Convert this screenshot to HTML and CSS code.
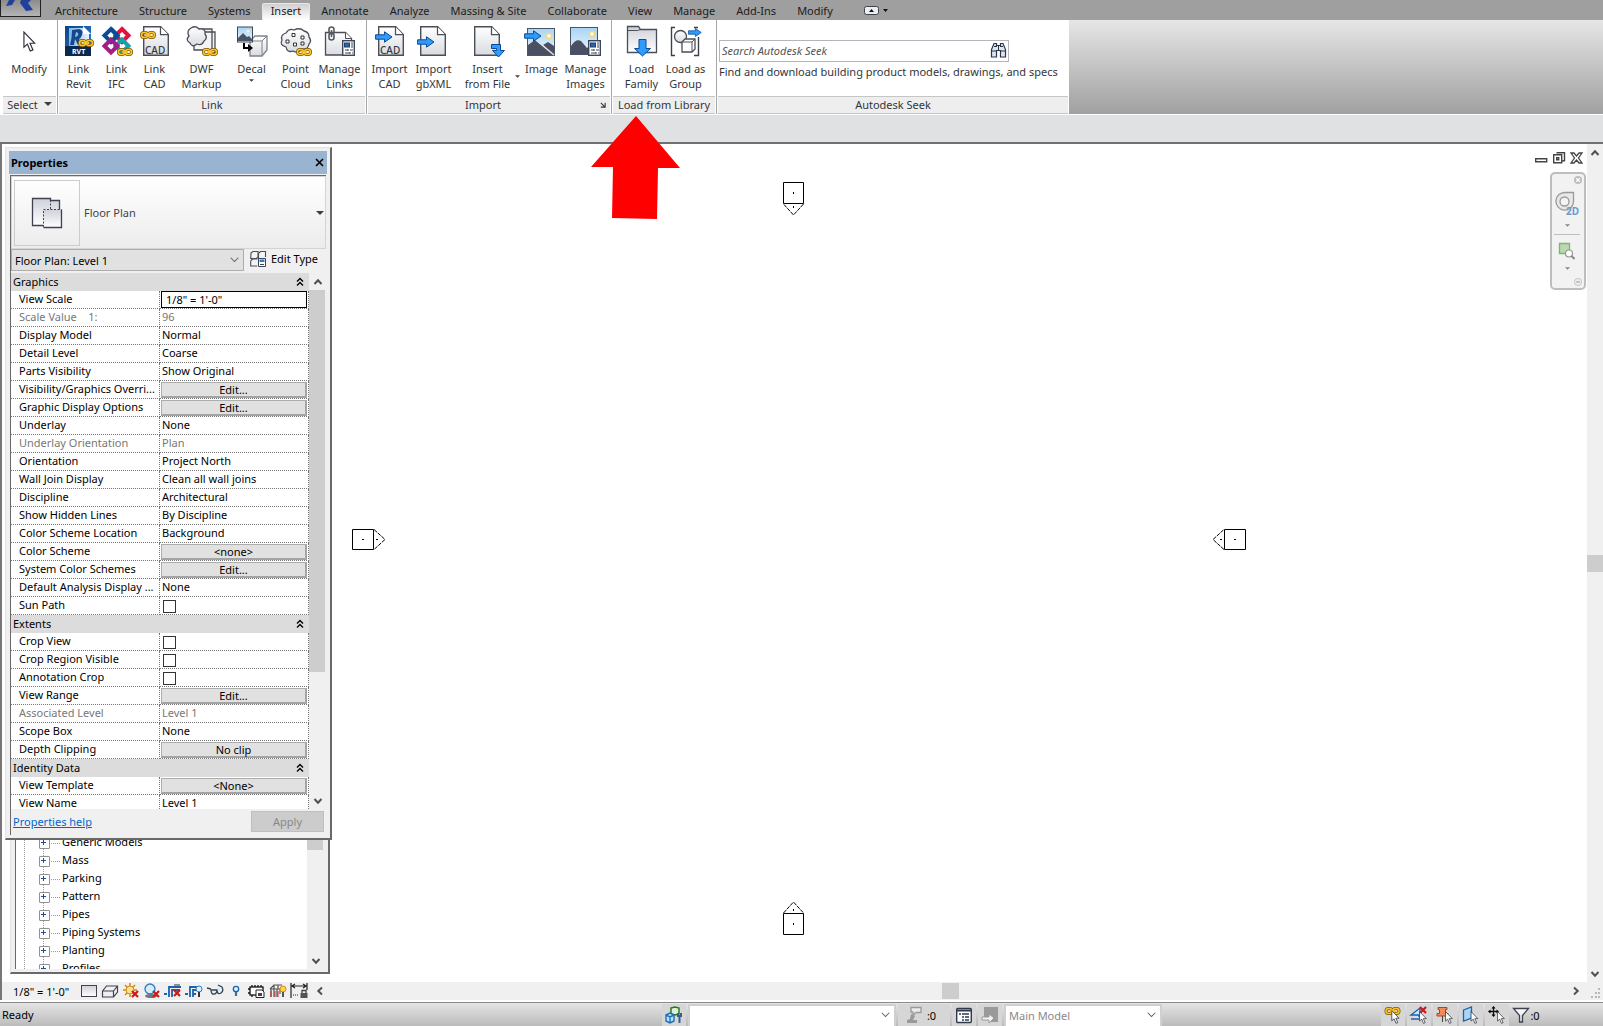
FILE: index.html
```html
<!DOCTYPE html>
<html lang="en">
<head>
    <meta charset="UTF-8">
    <meta name="viewport" content="width=device-width, initial-scale=1.0">
    <title>Floor Plan: Level 1</title>
    <link rel="stylesheet" href="styles.css">
</head>
<body>
    <!-- shared icon parts -->
    <svg class="defs" aria-hidden="true">
        <defs>
            <linearGradient id="paper" x1="0" y1="0" x2="0" y2="1">
                <stop offset="0" stop-color="#ffffff"/>
                <stop offset="1" stop-color="#d9dbe0"/>
            </linearGradient>
            <linearGradient id="sky" x1="0" y1="0" x2="0" y2="1">
                <stop offset="0" stop-color="#a8d4f5"/>
                <stop offset="1" stop-color="#eef7fd"/>
            </linearGradient>
            <linearGradient id="revit" x1="0" y1="0" x2="1" y2="1">
                <stop offset="0" stop-color="#0a4288"/>
                <stop offset="1" stop-color="#2f8ad4"/>
            </linearGradient>
            <linearGradient id="ice" x1="0" y1="0" x2="1" y2="0">
                <stop offset="0" stop-color="#7db9e8"/>
                <stop offset="1" stop-color="#eaf5fd"/>
            </linearGradient>
            <linearGradient id="steel" x1="0" y1="0" x2="0" y2="1">
                <stop offset="0" stop-color="#cfd1da"/>
                <stop offset="1" stop-color="#ffffff"/>
            </linearGradient>
        </defs>
        <symbol id="chain" viewBox="0 0 16 8">
            <g fill="none" stroke="#7d5500" stroke-width="3">
                <rect x="1.500" y="1.500" width="6" height="5" rx="2.500"/>
                <rect x="8.500" y="1.500" width="6" height="5" rx="2.500"/>
            </g>
            <g fill="none" stroke="#fcc62c" stroke-width="1.500">
                <rect x="1.500" y="1.500" width="6" height="5" rx="2.500"/>
                <rect x="8.500" y="1.500" width="6" height="5" rx="2.500"/>
                <path d="M5 4h6"/>
            </g>
        </symbol>
        <symbol id="page" viewBox="0 0 26 30">
            <path d="M.7.700h17L25.300 8.500v20.800H.7z" fill="url(#paper)" stroke="#4a4e57" stroke-width="1.400"/>
            <path d="M17.500.700v8h7.800" fill="#fff" stroke="#4a4e57" stroke-width="1.200"/>
        </symbol>
        <symbol id="arrow" viewBox="0 0 18 12">
            <path d="M.6 3.800h8.900V.8l7.500 5.200-7.500 5.200v-3H.6z" fill="#2f9bff" stroke="#0b4a94"/>
        </symbol>
        <symbol id="form" viewBox="0 0 13 16">
            <rect x=".7" y=".7" width="11.600" height="14.600" fill="#fff" stroke="#3c4658" stroke-width="1.400"/>
            <rect x="2.500" y="3" width="5" height="4" fill="#2f66a8" stroke="#1c3d6e"/>
            <path d="M9 3h2M9 5h2M9 7h2M3 10h3M8 10h3M3 13h5M10 13h1M6 9v2M8 12v2" stroke="#3c4658"/>
        </symbol>
        <symbol id="pointer" viewBox="0 0 12 20">
            <path d="M.7 1v14.500l3.300-3 2.700 6.500 2.600-1-2.800-6.300h4.600z" fill="#fff" stroke="#2c3038" stroke-width="1.100"/>
        </symbol>
        <symbol id="redx" viewBox="0 0 8 8">
            <path d="M1 1l6 6M7 1L1 7" stroke="#d01818" stroke-width="2.200"/>
        </symbol>
        <symbol id="up" viewBox="0 0 10 10"><path d="M1.500 7L5 3.300 8.500 7" fill="none" stroke="#505050" stroke-width="2"/></symbol>
        <symbol id="down" viewBox="0 0 10 10"><path d="M1.500 3L5 6.700 8.500 3" fill="none" stroke="#505050" stroke-width="2"/></symbol>
        <symbol id="left" viewBox="0 0 10 10"><path d="M7 1.500L3.300 5 7 8.500" fill="none" stroke="#505050" stroke-width="2"/></symbol>
        <symbol id="right" viewBox="0 0 10 10"><path d="M3 1.500L6.700 5 3 8.500" fill="none" stroke="#505050" stroke-width="2"/></symbol>
        <symbol id="drop" viewBox="0 0 12 8"><path d="M1 1l5 5 5-5" fill="none" stroke="#606060" stroke-width="1.400"/></symbol>
        <symbol id="triangle" viewBox="0 0 8 4"><path d="M0 0h8L4 4z" fill="#3f3f3f"/></symbol>
        <symbol id="collapse" viewBox="0 0 8 10"><path d="M1 4.500L4 1.500l3 3M1 8.500l3-3 3 3" fill="none" stroke="#000" stroke-width="1.400"/></symbol>
        <symbol id="marker" viewBox="0 0 34 22">
            <path d="M.5.500h21v20H.5z" fill="#fff" stroke="#000"/>
            <path d="M22 .5l11 10-11 10" fill="none" stroke="#000" stroke-dasharray="4 1"/>
            <path d="M10 10.500h2M24 10.500h2" stroke="#000"/>
        </symbol>
    </svg>

    <header>
        <nav class="tabs">
            <button class="app-button" aria-label="Application menu">
                <svg width="40" height="16" viewBox="0 0 40 16"><path d="M8 0L5 6l6-1 3-5zM20 0h10L27 3l5 7-7 1-6-8z" fill="#21409a"/></svg>
            </button>
            <a href="#">Architecture</a>
            <a href="#">Structure</a>
            <a href="#">Systems</a>
            <a href="#" class="active">Insert</a>
            <a href="#">Annotate</a>
            <a href="#">Analyze</a>
            <a href="#">Massing &amp; Site</a>
            <a href="#">Collaborate</a>
            <a href="#">View</a>
            <a href="#">Manage</a>
            <a href="#">Add-Ins</a>
            <a href="#">Modify</a>
            <button class="ribbon-toggle" aria-label="Minimize ribbon">
                <svg width="24" height="9" viewBox="0 0 24 9"><rect x=".5" y=".5" width="14" height="8" rx="2" fill="#eee" stroke="#3c4450"/><path d="M5 6l2.500-3L10 6zM19 3h5l-2.500 3z" fill="#111"/></svg>
            </button>
        </nav>

        <div class="ribbon">
            <section class="panel panel-select">
                <div class="tools">
                    <button class="tool">
                        <svg viewBox="0 0 32 32"><use href="#pointer" x="10" y="6" width="13" height="21"/></svg>
                        <span>Modify</span>
                    </button>
                </div>
                <h2>Select <svg class="tri"><use href="#triangle"/></svg></h2>
            </section>

            <section class="panel panel-link">
                <div class="tools">
                    <button class="tool narrow">
                        <svg viewBox="0 0 32 32">
                            <rect x="2" y="1" width="26" height="30" fill="url(#revit)"/>
                            <path d="M6 3h14l6 6v12H6z" fill="url(#ice)"/>
                            <path d="M20 1v8h8z" fill="#fff"/>
                            <path d="M9 5l7-1q5 1 3 6-1 3-3 4l3 5-4 1-3-6-1 6H7q2-7 2-15z" fill="#15498c"/>
                            <path d="M13 7l-1 5q4-1 3-4z" fill="#8cc0ea"/>
                            <rect x="2" y="21" width="26" height="10" fill="#0b2850"/>
                            <text x="9" y="29" class="rvt">RVT</text>
                            <use href="#chain" x="15" y="14" width="16" height="8"/>
                        </svg>
                        <span>Link<br>Revit</span>
                    </button>
                    <button class="tool narrow">
                        <svg viewBox="0 0 32 32">
                            <g fill="none" stroke-width="4">
                                <path d="M10 4l6.500 6.500L10 17l-6.500-6.500z" stroke="#0c4a94"/>
                                <path d="M21 4l6.500 6.500L21 17l-6.500-6.500z" stroke="#e2133f"/>
                                <path d="M21 14.500l6.500 6.500-6.500 6.500-6.500-6.500z" stroke="#12a5ac"/>
                                <path d="M10 14.500l6.500 6.500-6.500 6.500L3.500 21z" stroke="#a51c88"/>
                                <path d="M10 4l6.500 6.500-4 4" stroke="#0c4a94"/>
                            </g>
                            <use href="#chain" x="16" y="23" width="16" height="8"/>
                        </svg>
                        <span>Link<br>IFC</span>
                    </button>
                    <button class="tool narrow">
                        <svg viewBox="0 0 32 32">
                            <use href="#page" x="4" y="1" width="26" height="30"/>
                            <use href="#chain" x="1" y="6" width="16" height="8"/>
                            <text x="6" y="29" class="cad">CAD</text>
                        </svg>
                        <span>Link<br>CAD</span>
                    </button>
                    <button class="tool wide">
                        <svg viewBox="0 0 32 32">
                            <path d="M14 7h15v21h-4M12 4h14v21H8v-5" fill="#f4f4f6" stroke="#4a4e57" stroke-width="1.300"/>
                            <path d="M5 3q5-3 8 1 7-1 6 5 3 4-1 7-2 5-7 3-5 4-7-1-5-3-1-7-3-5 2-8z" fill="url(#paper)" stroke="#4a4e57" stroke-width="1.300"/>
                            <use href="#chain" x="16" y="23" width="16" height="8"/>
                        </svg>
                        <span>DWF<br>Markup</span>
                    </button>
                    <button class="tool">
                        <svg viewBox="0 0 32 32">
                            <path d="M14 16l5-5h12v14l-5 6H14z" fill="url(#paper)" stroke="#7d828c" stroke-width="1.300"/>
                            <path d="M14 16h12v15M26 16l5-5" fill="none" stroke="#7d828c"/>
                            <rect x="1.500" y="2" width="15" height="15" fill="url(#sky)" stroke="#3c4658"/>
                            <path d="M2 16v-3l5-5 4 4 2-1 3 3v2z" fill="#4a5568"/>
                            <circle cx="12" cy="6" r="1.500" fill="#fff3c0"/>
                            <path d="M8 18v5h6" fill="none" stroke="#000" stroke-width="2"/>
                            <path d="M12 19l5 4-5 4z"/>
                        </svg>
                        <span>Decal<br><svg class="tri-small"><use href="#triangle"/></svg></span>
                    </button>
                    <button class="tool">
                        <svg viewBox="0 0 32 32">
                            <path d="M6 8q3-5 8-3 6-3 10 1 5 1 5 6 3 4 0 7-1 6-7 5-4 5-9 2-6 2-7-4-7-2-4-7-2-5 4-7z" fill="url(#paper)" stroke="#4a4e57" stroke-width="1.300"/>
                            <path d="M12 8.500h3v3h-3zM21 11h3v3h-3zM6 15h3v3H6zM13.500 18h3v3h-3zM21 17h3v3h-3z" fill="#fff" stroke="#333"/>
                            <use href="#chain" x="16" y="23" width="16" height="8"/>
                        </svg>
                        <span>Point<br>Cloud</span>
                    </button>
                    <button class="tool">
                        <svg viewBox="0 0 32 32">
                            <path d="M1.500 7.500h20l6 6V30h-26z" fill="url(#paper)" stroke="#4a4e57" stroke-width="1.300"/>
                            <path d="M21.500 7.500v6h6" fill="#fff" stroke="#4a4e57"/>
                            <use href="#form" x="18" y="15" width="13" height="16"/>
                            <g fill="none" stroke="#555a63" stroke-width="1.600">
                                <rect x="5" y="2" width="5" height="7" rx="2.500"/>
                                <rect x="5" y="8" width="5" height="7" rx="2.500"/>
                                <path d="M7.500 5v7"/>
                            </g>
                        </svg>
                        <span>Manage<br>Links</span>
                    </button>
                </div>
                <h2>Link</h2>
            </section>

            <section class="panel panel-import">
                <div class="tools">
                    <button class="tool">
                        <svg viewBox="0 0 32 32">
                            <use href="#page" x="4" y="1" width="26" height="30"/>
                            <use href="#arrow" x="1" y="6" width="18" height="12"/>
                            <text x="6" y="29" class="cad">CAD</text>
                        </svg>
                        <span>Import<br>CAD</span>
                    </button>
                    <button class="tool">
                        <svg viewBox="0 0 32 32">
                            <use href="#page" x="2" y="1" width="26" height="30"/>
                            <use href="#arrow" x="-1" y="11" width="18" height="12"/>
                        </svg>
                        <span>Import<br>gbXML</span>
                    </button>
                    <button class="tool xwide">
                        <svg viewBox="0 0 32 32">
                            <use href="#page" x="2" y="1" width="26" height="30"/>
                            <path d="M19.500 19.500h9v6h4L26.500 32l-6-6.500h4v-2h-5z" fill="#2f9bff" stroke="#0b4a94"/>
                        </svg>
                        <span>Insert<br>from File</span>
                        <svg class="tri-small side"><use href="#triangle"/></svg>
                    </button>
                    <button class="tool">
                        <svg viewBox="0 0 32 32">
                            <rect x="1.500" y="3.500" width="27" height="27" fill="url(#sky)" stroke="#4a5568"/>
                            <path d="M2 30V20l7-5 19 15zM17 20l5-3 6 4v9z" fill="#4a5062"/>
                            <path d="M10 15l18 15" stroke="#dfe3e8" stroke-width="1.500"/>
                            <circle cx="23" cy="11" r="2.500" fill="#fff" stroke="#f5d878" stroke-width="1.500"/>
                            <use href="#arrow" x="-2" y="5" width="18" height="12"/>
                        </svg>
                        <span>Image</span>
                    </button>
                    <button class="tool">
                        <svg viewBox="0 0 32 32">
                            <rect x=".5" y="2.500" width="27" height="27" fill="url(#sky)" stroke="#4a5568"/>
                            <path d="M1 29V21q5-8 10-5l6 7 4-3 6 2v7z" fill="#4a5062"/>
                            <circle cx="22" cy="9" r="2.500" fill="#fff" stroke="#f5d878" stroke-width="1.500"/>
                            <use href="#form" x="18" y="15" width="13" height="16"/>
                        </svg>
                        <span>Manage<br>Images</span>
                    </button>
                </div>
                <h2>Import <svg class="launcher" viewBox="0 0 7 7"><path d="M1 1l4 4M6 1v5H1" fill="none" stroke="#333" stroke-width="1.300"/></svg></h2>
            </section>

            <section class="panel panel-load">
                <div class="tools">
                    <button class="tool">
                        <svg viewBox="0 0 32 32">
                            <path d="M1.500 1.500h11l2 3h16v23h-29z" fill="url(#steel)" stroke="#4a4e57" stroke-width="1.300"/>
                            <path d="M1.500 5.500h10l3-1" fill="none" stroke="#4a4e57"/>
                            <path d="M13 14.500h7v9h4.500l-8 7.500-8-7.500H13z" fill="#2f9bff" stroke="#0b4a94"/>
                        </svg>
                        <span>Load<br>Family</span>
                    </button>
                    <button class="tool">
                        <svg viewBox="0 0 32 32">
                            <path d="M5 2.500H1.500v28H5M24 2.500h4M24 30.500h4.500V12" fill="none" stroke="#3c4048" stroke-width="1.400"/>
                            <circle cx="10.500" cy="11.500" r="6" fill="url(#paper)" stroke="#4a4e57" stroke-width="1.300"/>
                            <path d="M12 17l3-3h10v10l-3 3H12z" fill="#fff" stroke="#4a4e57" stroke-width="1.300"/>
                            <path d="M12 17h10v10M22 17l3-3" fill="none" stroke="#4a4e57"/>
                            <use href="#arrow" x="18" y="2" width="14" height="11"/>
                        </svg>
                        <span>Load as<br>Group</span>
                    </button>
                </div>
                <h2>Load from Library</h2>
            </section>

            <section class="panel panel-seek">
                <div class="seek">
                    <div class="search">
                        <input type="text" placeholder="Search Autodesk Seek" aria-label="Search Autodesk Seek">
                        <button aria-label="Search">
                            <svg width="17" height="16" viewBox="0 0 17 16"><path d="M4 1.500h2.500v2h4v-2H13l2.500 6V15H10.500V8.500h-4V15H1.500V7.500z" fill="#dfe7f2" stroke="#2b3648" stroke-width="1.200"/><path d="M1.500 9h5M10.500 9h5M4 4.500h3M10 4.500h3M8.500 4v4" stroke="#2b3648"/></svg>
                        </button>
                    </div>
                    <p>Find and download building product models, drawings, and specs</p>
                </div>
                <h2>Autodesk Seek</h2>
            </section>
        </div>
        <div class="options-bar"></div>
    </header>

    <main>
        <div class="canvas">
            <svg class="marker north"><use href="#marker" transform="rotate(90 11 11)" width="34" height="22"/></svg>
            <svg class="marker west"><use href="#marker" width="34" height="22"/></svg>
            <svg class="marker east"><use href="#marker" transform="rotate(180 11 11)" width="34" height="22"/></svg>
            <svg class="marker south"><use href="#marker" transform="rotate(-90 11 11)" width="34" height="22"/></svg>

            <svg class="window-buttons" width="48" height="14" viewBox="0 0 48 14">
                <path d="M.7 7.700h11v3H.7z" fill="#fff" stroke="#444" stroke-width="1.400"/>
                <path d="M21.500 1.700h8v8h-2M18.700 3.700h8v8h-8zM21.700 6.700h2v2h-2z" fill="none" stroke="#444" stroke-width="1.400"/>
                <path d="M36 2h3l2.500 3L44 2h3l-3.500 5L47 12h-3l-2.500-3L39 12h-3l3.500-5z" fill="#fff" stroke="#444" stroke-width="1.300"/>
            </svg>

            <div class="nav-bar">
                <svg class="nav-dot" viewBox="0 0 9 9"><circle cx="4.500" cy="4.500" r="4.500" fill="#bdbdbd"/><path d="M2.500 2.500l4 4M6.500 2.500l-4 4" stroke="#fff" stroke-width="1.300"/></svg>
                <button aria-label="2D steering wheel">
                    <svg width="26" height="26" viewBox="0 0 26 26"><path d="M11 1.500h8.500V11a8.800 8.800 0 1 1-8.500-9.500z" fill="#e8e8e8" stroke="#999" stroke-width="1.300"/><circle cx="10.500" cy="10.500" r="4.500" fill="#f4f4f4" stroke="#999" stroke-width="1.300"/><text x="12" y="24" class="two-d">2D</text></svg>
                </button>
                <svg class="tri-nav"><use href="#triangle"/></svg>
                <hr>
                <button aria-label="Zoom in region">
                    <svg width="18" height="18" viewBox="0 0 18 18"><path d="M1.500 1.500h10v10h-10z" fill="#bcd8b2" stroke="#7eb56e" stroke-width="1.300"/><circle cx="11" cy="11.500" r="3.500" fill="#fff" stroke="#999" stroke-width="1.200"/><path d="M13.500 14l3 3" stroke="#888" stroke-width="2"/></svg>
                </button>
                <svg class="tri-nav"><use href="#triangle"/></svg>
                <svg class="nav-dot last" viewBox="0 0 9 9"><circle cx="4.500" cy="4.500" r="4" fill="#eee" stroke="#bdbdbd"/><path d="M2.500 4.500h4" stroke="#aaa" stroke-width="1.500"/></svg>
            </div>

            <aside class="palette browser">
                <div class="browser-body">
                    <ul>
                        <li>Generic Models</li>
                        <li>Mass</li>
                        <li>Parking</li>
                        <li>Pattern</li>
                        <li>Pipes</li>
                        <li>Piping Systems</li>
                        <li>Planting</li>
                        <li>Profiles</li>
                    </ul>
                    <div class="scroll-y">
                        <span class="thumb"></span>
                        <button aria-label="Scroll down"><svg><use href="#down"/></svg></button>
                    </div>
                </div>
            </aside>

            <aside class="palette properties">
                <div class="title-bar">
                    <h1>Properties</h1>
                    <button aria-label="Close"><svg width="9" height="9" viewBox="0 0 9 9"><path d="M1 1l7 7M8 1L1 8" stroke="#000" stroke-width="1.600"/></svg></button>
                </div>
                <div class="palette-body">
                    <button class="type-selector">
                        <span class="type-thumb">
                            <svg width="32" height="32" viewBox="0 0 32 32">
                                <path d="M1.500 1.500h18v2h9v24h-9v1h-18z" fill="url(#steel)" stroke="#3f4250" stroke-width="1.300"/>
                                <path d="M12.500 12.500h18v18h-18z" fill="url(#steel)"/>
                                <path d="M12.500 30.500h18v-18" fill="none" stroke="#3f4250" stroke-width="1.300"/>
                                <path d="M19.500 3v9.500M12.500 30V12.500h18" fill="none" stroke="#3f4250" stroke-dasharray="2 1.500"/>
                            </svg>
                        </span>
                        <span class="type-name">Floor Plan</span>
                        <svg class="tri"><use href="#triangle"/></svg>
                    </button>
                    <div class="instance-row">
                        <div class="combo">
                            <select aria-label="Instance"><option>Floor Plan: Level 1</option></select>
                            <svg><use href="#drop"/></svg>
                        </div>
                        <button class="edit-type">
                            <svg width="16" height="16" viewBox="0 0 16 16"><path d="M1 2l2-1.500h5V6l-1.500 1.500H.7zM9 2l1.500-1.500h5V6M1 9.500l1.500-1.500h5M.7 9.500V15h6.500M8.500 2v5.500h6" fill="#f5f5f7" stroke="#4a4e57" stroke-width="1.100"/><path d="M8.500 7.500h7v8h-7z" fill="#fff" stroke="#3c4658"/><path d="M9.500 8.500h5v2.500h-5z" fill="#2878d0"/><path d="M10 13.500h4" stroke="#3c4658"/></svg>
                            Edit Type
                        </button>
                    </div>
                    <div class="grid-area">
                        <table>
                            <tr class="group"><th colspan="2">Graphics<svg><use href="#collapse"/></svg></th></tr>
                            <tr><td><label for="scale">View Scale</label></td><td class="field"><input type="text" id="scale" value="1/8&quot; = 1'-0&quot;"></td></tr>
                            <tr class="off"><td>Scale Value &nbsp;&nbsp; 1:</td><td>96</td></tr>
                            <tr><td>Display Model</td><td>Normal</td></tr>
                            <tr><td>Detail Level</td><td>Coarse</td></tr>
                            <tr><td>Parts Visibility</td><td>Show Original</td></tr>
                            <tr><td>Visibility/Graphics Overri...</td><td class="field"><button>Edit...</button></td></tr>
                            <tr><td>Graphic Display Options</td><td class="field"><button>Edit...</button></td></tr>
                            <tr><td>Underlay</td><td>None</td></tr>
                            <tr class="off"><td>Underlay Orientation</td><td>Plan</td></tr>
                            <tr><td>Orientation</td><td>Project North</td></tr>
                            <tr><td>Wall Join Display</td><td>Clean all wall joins</td></tr>
                            <tr><td>Discipline</td><td>Architectural</td></tr>
                            <tr><td>Show Hidden Lines</td><td>By Discipline</td></tr>
                            <tr><td>Color Scheme Location</td><td>Background</td></tr>
                            <tr><td>Color Scheme</td><td class="field"><button>&lt;none&gt;</button></td></tr>
                            <tr><td>System Color Schemes</td><td class="field"><button>Edit...</button></td></tr>
                            <tr><td>Default Analysis Display ...</td><td>None</td></tr>
                            <tr><td><label for="sun">Sun Path</label></td><td><input type="checkbox" id="sun"></td></tr>
                            <tr class="group"><th colspan="2">Extents<svg><use href="#collapse"/></svg></th></tr>
                            <tr><td><label for="crop">Crop View</label></td><td><input type="checkbox" id="crop"></td></tr>
                            <tr><td><label for="region">Crop Region Visible</label></td><td><input type="checkbox" id="region"></td></tr>
                            <tr><td><label for="annotation">Annotation Crop</label></td><td><input type="checkbox" id="annotation"></td></tr>
                            <tr><td>View Range</td><td class="field"><button>Edit...</button></td></tr>
                            <tr class="off"><td>Associated Level</td><td>Level 1</td></tr>
                            <tr><td>Scope Box</td><td>None</td></tr>
                            <tr><td>Depth Clipping</td><td class="field"><button>No clip</button></td></tr>
                            <tr class="group"><th colspan="2">Identity Data<svg><use href="#collapse"/></svg></th></tr>
                            <tr><td>View Template</td><td class="field"><button>&lt;None&gt;</button></td></tr>
                            <tr><td>View Name</td><td>Level 1</td></tr>
                        </table>
                        <div class="scroll-y">
                            <button aria-label="Scroll up"><svg><use href="#up"/></svg></button>
                            <span class="thumb"></span>
                            <button aria-label="Scroll down"><svg><use href="#down"/></svg></button>
                        </div>
                    </div>
                    <div class="palette-footer">
                        <a href="#">Properties help</a>
                        <button disabled>Apply</button>
                    </div>
                </div>
            </aside>
        </div>
        <div class="canvas-scroll">
            <button aria-label="Scroll up"><svg><use href="#up"/></svg></button>
            <span class="thumb"></span>
            <button aria-label="Scroll down"><svg><use href="#down"/></svg></button>
        </div>
    </main>

    <div class="view-bar">
        <span class="scale">1/8" = 1'-0"</span>
        <div class="view-tools">
            <button aria-label="Detail level"><svg viewBox="0 0 18 16"><rect x="1.500" y="2.500" width="15" height="11" fill="url(#steel)" stroke="#3f4250"/></svg></button>
            <button aria-label="Visual style"><svg viewBox="0 0 18 16"><path d="M1.500 8l4-5h11v6l-4 5h-11zM1.500 8h11v6M12.500 8l4-5" fill="#f0f0f2" stroke="#3f4250" stroke-width="1.200"/></svg></button>
            <button aria-label="Sun path"><svg viewBox="0 0 18 16"><path d="M8 0v14M1 7h14M3 2l10 10M13 2L3 12" stroke="#d08a10" stroke-width="1.500"/><circle cx="8" cy="7" r="4" fill="#ffe08a" stroke="#d08a10"/><use href="#redx" x="9" y="7" width="8" height="8"/></svg></button>
            <button aria-label="Shadows"><svg viewBox="0 0 18 16"><ellipse cx="8" cy="13" rx="6" ry="2" fill="#777"/><circle cx="7" cy="6" r="5" fill="#d5ecfb" stroke="#2b7cc0" stroke-width="1.300"/><use href="#redx" x="9" y="7" width="8" height="8"/></svg></button>
            <button aria-label="Crop view"><svg viewBox="0 0 18 16"><path d="M0 11h3M5 14V4h12M8 14V7h8" fill="none" stroke="#1c62ac" stroke-width="1.800"/><path d="M10 2h6" stroke="#333"/><use href="#redx" x="9" y="6" width="8" height="8"/></svg></button>
            <button aria-label="Show crop region"><svg viewBox="0 0 18 16"><path d="M0 11h3M5 14V4h7M8 14V7h4M8 11h3" fill="none" stroke="#1c62ac" stroke-width="1.800"/><circle cx="14" cy="6" r="3" fill="#d9f0ff" stroke="#2b7cc0"/><path d="M14 9v5" stroke="#333" stroke-width="2"/></svg></button>
            <button aria-label="Temporary hide"><svg viewBox="0 0 18 16"><path d="M1 5l4 1M5 7q0 5 4 4 2-1 2-4zM11 8q1 4 4 2 3-2 1-6l-4-2" fill="#d9eef8" stroke="#39424f" stroke-width="1.300"/></svg></button>
            <button aria-label="Reveal hidden elements"><svg viewBox="0 0 18 16"><circle cx="9" cy="6" r="2.700" fill="#d9f0ff" stroke="#1c62ac" stroke-width="1.300"/><path d="M9 9v4" stroke="#4a6a90" stroke-width="2.200"/></svg></button>
            <button aria-label="Temporary view properties"><svg viewBox="0 0 18 16"><rect x="2" y="4" width="13" height="8" fill="#fff" stroke="#111" stroke-width="1.300"/><path d="M4 2v2M7 2v2M10 2v2M13 2v2M4 12v2M0 6h2M0 10h2" stroke="#111" stroke-width="1.300"/><path d="M8 7h6l2 2v5.500H8z" fill="#fff" stroke="#222"/><path d="M10 10h4v3h-4z" fill="#444"/></svg></button>
            <button aria-label="Analytical model"><svg viewBox="0 0 18 16"><path d="M1 6l4-4h8M1 6h11M2 6v8M5 6v8M8 6v8M11 6v5M5 2v4M9 2v4" fill="none" stroke="#555" stroke-width="1.200"/><path d="M2 8v6M6 8v6M9 8v6" stroke="#c03028"/><circle cx="14" cy="6" r="3" fill="#ffd24a" stroke="#e08a10"/><path d="M14 9v5" stroke="#555" stroke-width="2"/></svg></button>
            <button aria-label="Reveal constraints"><svg viewBox="0 0 18 16"><path d="M1 0v15M17 0v7M2 3h14M5 1L2 3l3 2M13 1l3 2-3 2" fill="none" stroke="#222" stroke-width="1.200"/><path d="M3 12h6" stroke="#222" stroke-dasharray="1 1"/><path d="M12 10V7.500h4V10" fill="none" stroke="#444" stroke-width="1.300"/><path d="M10.500 10h7v5h-7z" fill="#555"/></svg></button>
            <button aria-label="Scroll left"><svg class="mini"><use href="#left"/></svg></button>
        </div>
        <div class="scroll-x">
            <span class="thumb"></span>
            <button aria-label="Scroll right"><svg class="mini"><use href="#right"/></svg></button>
            <svg class="grip" viewBox="0 0 10 10"><path d="M7 0h2v2H7zM4 4h2v2H4zM7 4h2v2H7zM0 8h2v2H0zM4 8h2v2H4zM7 8h2v2H7z" fill="#b8b8b8"/></svg>
        </div>
    </div>

    <footer>
        <span class="message">Ready</span>
        <div class="status-group">
            <button aria-label="Worksets"><svg viewBox="0 0 18 18"><path d="M6 2l4-1 4 1v6l-4 1-4-1z" fill="#dff0d8" stroke="#2c7a1e" stroke-width="1.500"/><path d="M1 9l4-2 4 2v6l-4 2-4-2zM1 9l4 2 4-2M5 11v6" fill="#bfe2fa" stroke="#1c6fb5" stroke-width="1.400"/><path d="M13 7v3h3V7M14.500 10v7" fill="none" stroke="#3a5a90" stroke-width="2"/></svg></button>
            <div class="status-combo">
                <select aria-label="Active workset"><option></option></select>
                <svg><use href="#drop"/></svg>
            </div>
            <button class="requests" aria-label="Editing requests"><svg viewBox="0 0 18 18"><path d="M5 1.500h10v5h-5l-3 3V6H5z" fill="#ececec" stroke="#999" stroke-width="1.300"/><path d="M5 8l4 2-2 4h4v3H1v-3l3-1z" fill="#999"/></svg>:0</button>
            <button aria-label="Design options"><svg viewBox="0 0 18 18"><rect x="1.700" y="2.500" width="14.600" height="14" rx="1" fill="#fff" stroke="#2f3a4c" stroke-width="1.400"/><path d="M2 4.500h14" stroke="#2f3a4c" stroke-width="2"/><path d="M4 8h2M7 8h7M7 11h2M10 11h4M7 14h2M10 14h4" stroke="#2f3a4c" stroke-width="1.600"/></svg></button>
            <button aria-label="Pick to edit"><svg viewBox="0 0 18 18"><path d="M3 1h14v15h-7v-3H3z" fill="#9a9a9a"/><path d="M1 11h7V8l5 4-5 5v-3H1z" fill="#f4f4f4" stroke="#9a9a9a"/></svg></button>
            <div class="status-combo options">
                <select aria-label="Design option"><option>Main Model</option></select>
                <svg><use href="#drop"/></svg>
            </div>
        </div>
        <div class="status-group selection">
            <button aria-label="Select links"><svg viewBox="0 0 18 18"><use href="#chain" x="0" y="1" width="17" height="8"/><use href="#pointer" x="7" y="4" width="9" height="14"/></svg></button>
            <button aria-label="Select underlay elements"><svg viewBox="0 0 18 18"><path d="M1 9L10 2v7zM1 13h10l-3-4" fill="#cfe6f8" stroke="#1c62ac" stroke-width="1.300"/><use href="#redx" x="9" y="0" width="8" height="8"/><use href="#pointer" x="9" y="5" width="8" height="13"/></svg></button>
            <button aria-label="Select pinned elements"><svg viewBox="0 0 18 18"><path d="M2 1.500h9v2H9.500v4H12v2.500H1V7.500h2.500v-4H2z" fill="#f28a5c" stroke="#b0431a"/><path d="M6.500 10v6" stroke="#444"/><use href="#pointer" x="9" y="5" width="8" height="13"/></svg></button>
            <button aria-label="Select elements by face"><svg viewBox="0 0 18 18"><path d="M1.500 4l8-3v11l-8 3z" fill="#a9d6f7" stroke="#1c62ac" stroke-width="1.300"/><use href="#pointer" x="8" y="5" width="9" height="13"/></svg></button>
            <button aria-label="Drag elements on selection"><svg viewBox="0 0 18 18"><path d="M5.500 1v9M1 5.500h9" stroke="#111" stroke-width="1.300"/><path d="M5.500 0l2 2.500h-4zM5.500 11l2-2.500h-4zM0 5.500l2.500-2v4zM11 5.500l-2.500-2v4z"/><use href="#pointer" x="9" y="5" width="8" height="13"/></svg></button>
            <button class="filter" aria-label="Filter"><svg viewBox="0 0 18 18"><path d="M1.500 2.500h15l-6 7V16h-3V9.500z" fill="url(#paper)" stroke="#3f4250" stroke-width="1.300"/></svg>:0</button>
        </div>
    </footer>

    <svg class="callout" width="90" height="104" viewBox="0 0 90 104"><path d="M45 0l44 52H67l-1 51-45-1 1-51H0z" fill="#ff0000"/></svg>
</body>
</html>
```
FILE: styles.css
```css
* {
    box-sizing: border-box;
}

body {
    margin: 0;
    height: 100vh;
    display: flex;
    flex-direction: column;
    overflow: hidden;
    position: relative;
    font-family: "Noto Sans", "Open Sans", sans-serif;
    font-size: 11px;
    color: #000;
    background-color: #fff;
}

h1, h2, p, ul {
    margin: 0;
    padding: 0;
    font-size: 11px;
}

button, input, select {
    font: inherit;
    color: inherit;
    margin: 0;
    padding: 0;
    border: none;
    border-radius: 0;
    background: none;
}

svg {
    display: block;
    flex: none;
    overflow: visible;
}

.defs {
    position: absolute;
    width: 0;
    height: 0;
}

/* tabs */
.tabs {
    display: flex;
    align-items: flex-end;
    gap: 1px;
    height: 20px;
    background-color: #9f9f9f;
}

.tabs a {
    height: 17px;
    line-height: 15px;
    padding: 0 10px;
    color: #1c1c1c;
    text-decoration: none;
    white-space: nowrap;
}

.tabs a.active {
    padding: 0 8px;
    line-height: 14px;
    background: linear-gradient(#d0d0d0, #fff);
    border: 1px solid #e8e8e8;
    border-bottom: none;
    border-radius: 2px 2px 0 0;
}

.app-button {
    align-self: flex-start;
    width: 41px;
    height: 17px;
    margin-right: 3px;
    border: 1px solid #222;
    border-top: none;
    background: linear-gradient(#8c8c8c, #b4b4b4);
}

.ribbon-toggle {
    align-self: center;
    margin-left: 20px;
}

/* ribbon */
.ribbon {
    display: flex;
    height: 95px;
    border-bottom: 1px solid #fff;
    background: linear-gradient(#e6e6e6, #a0a0a0);
}

.panel {
    display: flex;
    flex-direction: column;
    border-right: 1px solid #a6a6a6;
    padding-right: 1px;
    background-color: #fff;
    color: #32363c;
}

.panel h2 {
    display: flex;
    justify-content: center;
    align-items: center;
    gap: 6px;
    position: relative;
    height: 18px;
    margin-left: 1px;
    padding-bottom: 2px;
    border-top: 1px solid #c6c6c6;
    border-bottom: 1px solid #c6c6c6;
    background-color: #eee;
    font-weight: normal;
    white-space: nowrap;
}

.panel-select {
    width: 58px;
    padding-left: 2px;
}

.panel-link {
    width: 309px;
}

.panel-import {
    width: 245px;
}

.panel-import h2 {
    padding-right: 12px;
}

.panel-load {
    width: 105px;
}

.panel-seek {
    width: 352px;
    border-right: none;
}

.tools {
    flex: 1;
    display: flex;
    justify-content: center;
}

.tool {
    display: flex;
    flex-direction: column;
    align-items: center;
    gap: 4px;
    position: relative;
    width: 44px;
    padding-top: 5px;
    line-height: 15px;
    white-space: nowrap;
}

.panel-link .tools,
.panel-import .tools {
    padding-right: 2px;
}

.tool > svg:first-child {
    width: 32px;
    height: 32px;
}

.tool.narrow {
    width: 38px;
}

.tool.wide {
    width: 56px;
}

.tool.xwide {
    width: 64px;
}

.cad {
    font-size: 10px;
    font-weight: 500;
    fill: #33373f;
}

.rvt {
    font-size: 7px;
    font-weight: bold;
    fill: #fff;
}

.tri {
    width: 8px;
    height: 4px;
}

.tri-small {
    width: 5px;
    height: 3px;
    margin: 3px auto 0;
}

.tri-small.side {
    position: absolute;
    right: 0;
    bottom: 18px;
}

.launcher {
    position: absolute;
    right: 4px;
    bottom: 5px;
    width: 6px;
    height: 6px;
}

.seek {
    flex: 1;
    padding: 20px 0 0 2px;
}

.search {
    display: flex;
    align-items: center;
    width: 290px;
    height: 22px;
    padding: 0 1px 2px 0;
    border: 1px solid #b4b4bc;
}

.search input {
    flex: 1;
    padding-left: 2px;
    font-style: italic;
    outline: none;
}

.search input::placeholder {
    color: #555;
}

.seek p {
    margin-top: 2px;
    line-height: 16px;
    white-space: nowrap;
}

.options-bar {
    height: 29px;
    background-color: #e0e1e3;
    border-bottom: 2px solid #707074;
}

/* drawing area */
main {
    flex: 1;
    display: flex;
    min-height: 0;
    border-left: 2px solid #77777a;
}

.canvas {
    flex: 1;
    position: relative;
    background-color: #fff;
}

.canvas-scroll {
    display: flex;
    flex-direction: column;
    width: 16px;
    background-color: #f0f0f0;
}

.canvas-scroll button,
.scroll-y button {
    display: flex;
    justify-content: center;
    align-items: center;
    width: 100%;
    height: 17px;
}

.canvas-scroll svg,
.scroll-y svg,
.mini {
    width: 10px;
    height: 10px;
}

.canvas-scroll .thumb {
    height: 17px;
    margin: auto 0;
    background-color: #cdcdcd;
}

.marker {
    position: absolute;
    width: 22px;
    height: 22px;
}

.north {
    left: 780px;
    top: 38px;
}

.west {
    left: 350px;
    top: 385px;
}

.east {
    left: 1222px;
    top: 384px;
}

.south {
    left: 781px;
    top: 769px;
}

.window-buttons {
    position: absolute;
    top: 7px;
    right: 4px;
}

.nav-bar {
    position: absolute;
    top: 28px;
    right: 1px;
    display: flex;
    flex-direction: column;
    align-items: center;
    gap: 7px;
    width: 36px;
    height: 118px;
    padding: 2px 4px 2px 2px;
    border: 2px solid #bdbdbd;
    border-radius: 5px;
    background-color: #f2f2f2;
}

.nav-bar hr {
    width: 26px;
    margin: 0;
    border: none;
    border-top: 1px solid #bdbdbd;
}

.nav-dot {
    align-self: flex-end;
    width: 8px;
    height: 8px;
    margin-right: -2px;
}

.nav-dot.last {
    margin-top: auto;
}

.tri-nav {
    width: 5px;
    height: 3px;
    opacity: 0.6;
}

.two-d {
    font-size: 10px;
    font-weight: bold;
    fill: #6a9bd0;
}

/* docked palettes */
.palette {
    position: absolute;
    padding: 3px;
    border: 1px solid #e3e3e3;
    border-right: 2px solid #696969;
    border-bottom: 2px solid #696969;
    background-color: #f0f0f0;
}

.properties {
    left: 3px;
    top: 3px;
    width: 327px;
}

.title-bar {
    display: flex;
    justify-content: space-between;
    align-items: center;
    height: 23px;
    padding: 0 3px 0 2px;
    background-color: #99b4d1;
}

.palette-body {
    margin: 1px 1px 0;
    border-top: 1px solid #696969;
    border-left: 1px solid #696969;
}

.type-selector {
    display: flex;
    align-items: center;
    width: 100%;
    height: 73px;
    padding: 2px 1px 2px 2px;
    border: 1px solid #d4d4d4;
    background: linear-gradient(#fff, #ececec);
    color: #444;
}

.type-thumb {
    display: flex;
    justify-content: center;
    align-items: center;
    width: 66px;
    height: 66px;
    border: 1px solid #ccc;
}

.type-name {
    flex: 1;
    margin-left: 4px;
    text-align: left;
}

.instance-row {
    display: flex;
    justify-content: space-between;
    align-items: flex-start;
    height: 24px;
}

.combo {
    display: flex;
    align-items: center;
    width: 233px;
    height: 22px;
    padding-right: 4px;
    border: 1px solid #adadad;
    background-color: #e1e1e1;
}

.combo select,
.status-combo select {
    flex: 1;
    appearance: none;
    padding-left: 3px;
}

.combo svg,
.status-combo svg {
    width: 9px;
    height: 6px;
}

.edit-type {
    display: flex;
    align-items: center;
    gap: 5px;
    height: 19px;
    padding-right: 8px;
}

.grid-area {
    display: flex;
    align-items: flex-start;
    height: 536px;
    overflow: hidden;
}

.grid-area table {
    flex: 1;
    table-layout: fixed;
    width: 298px;
    border-spacing: 0;
    background-color: #fff;
}

.grid-area td,
.grid-area th {
    height: 18px;
    line-height: 16px;
    text-align: left;
    font-weight: normal;
    vertical-align: top;
    white-space: nowrap;
    overflow: hidden;
}

.grid-area td {
    padding: 0 1px 0 2px;
    border-right: 1px dotted #777;
    border-bottom: 1px dotted #777;
}

.grid-area td:first-child {
    padding-left: 8px;
    padding-right: 0;
}

.grid-area td.field {
    padding: 0 1px;
}

.grid-area th {
    position: relative;
    padding: 1px 0 1px 2px;
    background-color: #dcdcdc;
}

.grid-area th svg {
    position: absolute;
    right: 5px;
    top: 4px;
    width: 8px;
    height: 10px;
}

.grid-area .off {
    color: #777;
}

.grid-area td button,
.grid-area td input {
    display: block;
}

.grid-area td button {
    width: 100%;
    height: 16px;
    margin-top: 1px;
    line-height: 13px;
    border: 1px solid #adadad;
    border-right: 2px solid #a4a4a4;
    border-bottom: 2px solid #a4a4a4;
    background-color: #e1e1e1;
}

.grid-area td input[type="text"] {
    width: 100%;
    height: 17px;
    padding: 0 0 1px 4px;
    border: 1px solid #000;
}

.grid-area td input[type="checkbox"] {
    appearance: none;
    width: 13px;
    height: 13px;
    margin: 3px 0 0 1px;
    border: 1px solid #333;
    background-color: #fff;
}

.scroll-y {
    display: flex;
    flex-direction: column;
    align-self: stretch;
    width: 17px;
    background-color: #f0f0f0;
}

.scroll-y .thumb {
    height: 382px;
    margin-right: 1px;
    background-color: #cdcdcd;
}

.scroll-y button:last-child {
    margin-top: auto;
}

.palette-footer {
    display: flex;
    justify-content: space-between;
    align-items: center;
    height: 26px;
    padding: 0 2px 2px;
}

.palette-footer a {
    color: #0066cc;
}

.palette-footer button {
    width: 73px;
    height: 21px;
    border: 1px solid #bfbfbf;
    background-color: #ccc;
    color: #888;
}

.browser {
    left: 8px;
    top: 683px;
    width: 320px;
    padding-bottom: 3px;
}

.browser-body {
    display: flex;
    height: 138px;
    margin: 0 1px;
    padding-top: 2px;
    border-left: 1px solid #696969;
    background-color: #fff;
}

.browser ul {
    flex: 1;
    margin-left: 8px;
    border-left: 1px dotted #999;
    list-style: none;
    overflow: hidden;
}

.browser li {
    display: flex;
    align-items: center;
    height: 18px;
    padding-left: 14px;
    background: repeating-linear-gradient(#999 0 1px, transparent 1px 2px) 18px 0 / 1px 18px no-repeat;
    line-height: 16px;
}

/* expander box and the dotted line to the name */
.browser li::before {
    content: "";
    order: -2;
    width: 9px;
    height: 9px;
    margin-top: 2px;
    border: 1px solid #919191;
    border-radius: 1px;
    background:
        linear-gradient(#234a9c, #234a9c) 1px 3px / 5px 1px no-repeat,
        linear-gradient(#234a9c, #234a9c) 3px 1px / 1px 5px no-repeat,
        #fff;
}

.browser li::after {
    content: "";
    order: -1;
    width: 9px;
    margin: 2px 2px 0 1px;
    border-top: 1px dotted #999;
}

.browser .scroll-y .thumb {
    height: 17px;
}

/* view control bar */
.view-bar {
    display: flex;
    align-items: center;
    height: 18px;
    border-left: 2px solid #77777a;
    background-color: #f0f0f0;
}

.view-bar .scale {
    width: 76px;
    padding-left: 11px;
    white-space: nowrap;
}

.view-tools {
    display: flex;
    align-items: center;
}

.view-tools button {
    display: flex;
    justify-content: center;
    align-items: center;
    width: 21px;
    height: 18px;
}

.view-tools svg:not(.mini) {
    width: 18px;
    height: 16px;
}

.scroll-x {
    flex: 1;
    display: flex;
    align-items: center;
    height: 100%;
}

.scroll-x .thumb {
    width: 17px;
    height: 16px;
    margin: 0 auto;
    background-color: #cdcdcd;
}

.grip {
    width: 10px;
    height: 10px;
    margin: 4px 2px 0 10px;
}

/* status bar */
footer {
    display: flex;
    align-items: flex-start;
    height: 24px;
    margin-top: 2px;
    border-top: 1px solid #8a8a8e;
    background: linear-gradient(#e4e4e4, #bcbcbc);
}

.message {
    width: 662px;
    padding-left: 2px;
    line-height: 23px;
}

.status-group {
    display: flex;
    gap: 2px;
    padding-top: 1px;
}

.selection {
    margin-left: auto;
    padding-right: 62px;
}

.status-group button {
    display: flex;
    justify-content: center;
    align-items: center;
    width: 24px;
    height: 22px;
    background-color: #d6d6d6;
}

.status-group button svg {
    width: 18px;
    height: 18px;
}

.status-group .requests {
    width: 52px;
    gap: 3px;
    padding-right: 6px;
}

.status-group .filter {
    width: 30px;
    background: none;
}

.status-combo {
    display: flex;
    align-items: center;
    width: 208px;
    height: 22px;
    padding: 0 4px 2px 0;
    border: 2px solid #d0d0d0;
    border-bottom: none;
    background-color: #fff;
    color: #888;
}

.status-combo.options {
    width: 158px;
}

/* red pointer over the Load Family tool */
.callout {
    position: absolute;
    left: 591px;
    top: 116px;
}
```
